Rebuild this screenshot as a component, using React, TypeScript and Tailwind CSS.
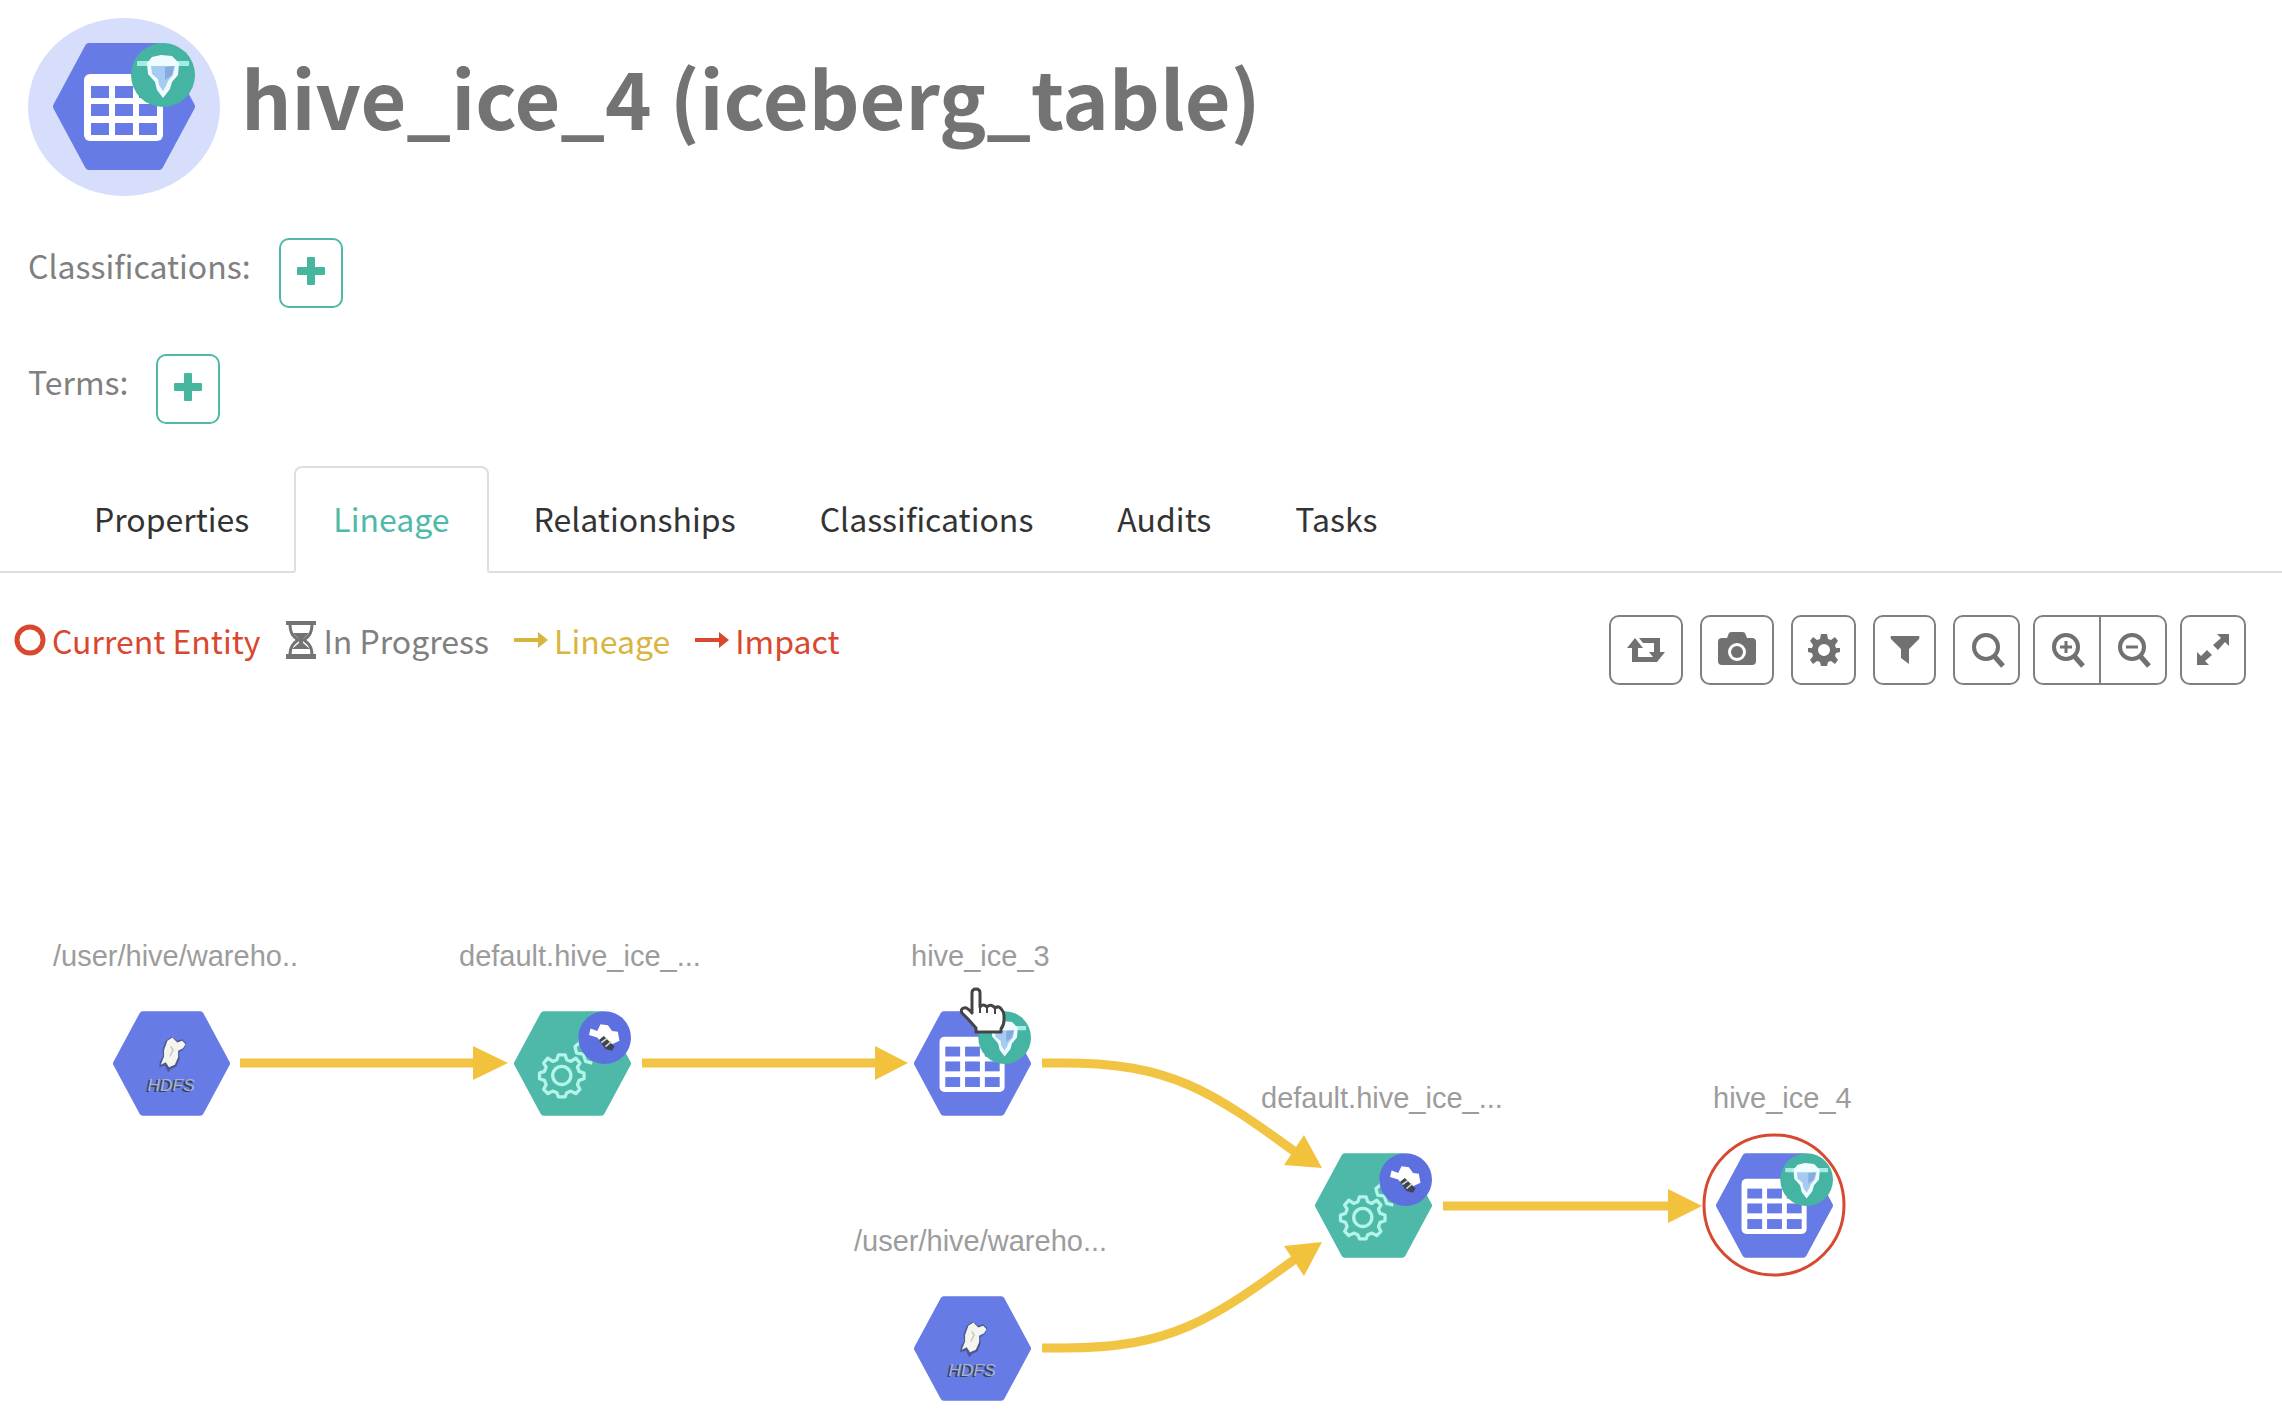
import { useState } from "react"
import type { ReactNode } from "react"
import clsx from "clsx"

type NodeKind = "hdfs" | "process" | "table"

const tabs = ["Properties", "Lineage", "Relationships", "Classifications", "Audits", "Tasks"]

const nodes: { id: string; kind: NodeKind; label: string; labelX: number; x: number; y: number; current?: boolean }[] = [
  { id: "hdfs-1", kind: "hdfs", label: "/user/hive/wareho..", labelX: 53, x: 171, y: 347 },
  { id: "process-1", kind: "process", label: "default.hive_ice_...", labelX: 459, x: 572, y: 347 },
  { id: "table-3", kind: "table", label: "hive_ice_3", labelX: 911, x: 972, y: 347 },
  { id: "hdfs-2", kind: "hdfs", label: "/user/hive/wareho...", labelX: 854, x: 972, y: 632 },
  { id: "process-2", kind: "process", label: "default.hive_ice_...", labelX: 1261, x: 1373, y: 489 },
  { id: "table-4", kind: "table", label: "hive_ice_4", labelX: 1713, x: 1774, y: 489, current: true },
]

const edges = [
  { line: "M240 347H476", head: "M473 330L508 347L473 364Z" },
  { line: "M642 347H878", head: "M875 330L908 347L875 364Z" },
  { line: "M1042 347H1064C1170 347 1210 374 1298 438", head: "M1304 419L1322 452L1284 449Z" },
  { line: "M1042 632H1064C1170 632 1210 605 1298 541", head: "M1284 530L1322 526L1304 560Z" },
  { line: "M1443 490H1671", head: "M1668 473L1702 490L1668 507Z" },
]

function Hexagon({ color }: { color: string }) {
  return (
    <path d="M36 4H106L138 63.500L106 123H36L4 63.500Z" fill={color} stroke={color} strokeWidth="8" strokeLinejoin="round" />
  )
}

function TableIcon() {
  return (
    <>
      <Hexagon color="#667be5" />
      <rect x="31" y="31" width="79" height="67" rx="6" fill="#fff" />
      {[43, 61, 80].map((y) =>
        [38, 62, 86].map((x) => <rect key={`${x}-${y}`} x={x} y={y} width="18" height="12" fill="#667be5" />)
      )}
      <circle cx="110" cy="32" r="32" fill="#46b4a3" />
      <path d="M84 18H136V23H84Z" fill="#a5ece4" />
      <path d="M94 20L99 14L108 12L119 13L126 20L125 32L119 39L117 46L110 55L104 47L102 39L95 31Z" fill="#effcff" />
      <path d="M98 23H122L120 32L115 38L113 43L110 48L106 42L105 36L99 31Z" fill="#a5cbf3" />
      <path d="M112 24L121 23L119 32L112 37Z" fill="#86acdf" />
    </>
  )
}

function ProcessIcon() {
  return (
    <>
      <Hexagon color="#4eb9a8" />
      <g fill="none" stroke="#b4f5ea" strokeWidth="4" strokeLinejoin="round">
        <path d="M54 53H62L64 59L69 61L75 57L80 63L77 68L79 73L85 75V82L79 84L77 89L80 95L75 100L69 97L64 99L62 104H54L52 99L47 97L41 100L36 95L39 89L37 84L31 82V75L37 73L39 68L36 63L41 57L47 61L52 59Z" />
        <circle cx="58" cy="78" r="11" />
        <path d="M81 29L80 38L74 43L76 51L84 52L87 61L95 63" />
      </g>
      <circle cx="110" cy="32" r="32" fill="#5d70df" />
      <path d="M91 29L93 21L101 24L105 16L114 17L119 24L126 25L128 36L119 40L111 34L105 37L101 32Z" fill="#fff" />
      <path d="M103 35L109 30L122 43L119 48L111 46Z" fill="#3d4555" />
      <path d="M106 38L113 33M111 43L118 37" stroke="#d7d4c5" strokeWidth="2" />
    </>
  )
}

function HdfsIcon() {
  return (
    <>
      <Hexagon color="#667be5" />
      <path d="M64 36L71 31L78 36L84 34L89 39L86 46L80 50L81 57L77 67L71 70L67 74L63 66L56 68L57 61L61 54L60 47Z" fill="#4d5992" />
      <path d="M66 36L72 32L78 38L84 36L88 40L85 45L79 48L79 56L75 65L68 68L64 62L58 65L62 55L62 47Z" fill="#f5f5ef" />
      <path d="M70 43L73 47L69 55" fill="none" stroke="#c8c9c6" strokeWidth="2" />
      <text x="40" y="98" fill="#39435d" fontFamily="Liberation Sans, sans-serif" fontSize="21" fontStyle="italic" fontWeight="bold">HDFS</text>
      <text x="42" y="97" fill="#a9b3c9" fontFamily="Liberation Sans, sans-serif" fontSize="21" fontStyle="italic" aria-hidden="true">HDFS</text>
    </>
  )
}

function EntityIcon({ kind }: { kind: NodeKind }) {
  if (kind === "hdfs") return <HdfsIcon />
  if (kind === "process") return <ProcessIcon />
  return <TableIcon />
}

function AddButton({ label }: { label: string }) {
  return (
    <button type="button" aria-label={label} className="flex h-[70px] w-16 items-center justify-center rounded-[10px] border-2 border-[#4fb9a6] text-[#46b69e]">
      <svg width="28" height="28" viewBox="0 0 28 28" className="-mt-1" fill="currentColor" aria-hidden="true">
        <path d="M11 0H17Q18 0 18 1V10H27Q28 10 28 11V17Q28 18 27 18H18V27Q18 28 17 28H11Q10 28 10 27V18H1Q0 18 0 17V11Q0 10 1 10H10V1Q10 0 11 0Z" />
      </svg>
    </button>
  )
}

function LegendArrow() {
  return (
    <svg width="34" height="16" viewBox="0 0 34 16" fill="currentColor" aria-hidden="true">
      <path d="M0 6H24V0L34 8L24 16V10H0Z" />
    </svg>
  )
}

function ToolButton({ label, className, children }: { label: string; className: string; children: ReactNode }) {
  return (
    <button type="button" aria-label={label} title={label} className={clsx("flex h-[70px] items-center justify-center border-2 border-[#808080] text-[#717171]", className)}>
      <svg width="40" height="36" viewBox="0 0 40 36" fill="currentColor" aria-hidden="true">
        {children}
      </svg>
    </button>
  )
}

function Magnifier({ children }: { children?: ReactNode }) {
  return (
    <g fill="none" stroke="currentColor">
      <circle cx="19" cy="15" r="12" strokeWidth="4" />
      <path d="M28 25L36 34" strokeWidth="5" />
      {children}
    </g>
  )
}

export default function App() {
  const [activeTab, setActiveTab] = useState("Lineage")

  return (
    <main className="min-h-screen bg-white font-['Noto_Sans_CJK_JP','Noto_Sans',sans-serif] text-[32px] leading-[48px] text-[#808080]">
      {/* Entity header */}
      <header className="flex items-center gap-[21px] px-7 pt-[18px]">
        <svg width="192" height="180" viewBox="0 0 192 180" aria-hidden="true">
          <ellipse cx="96" cy="89" rx="96" ry="89" fill="#d7defb" />
          <svg x="25" y="25" width="142" height="127" viewBox="0 0 142 127">
            <TableIcon />
          </svg>
        </svg>
        <h1 className="pb-6 text-[79px] leading-[100px] font-semibold text-[#737373]">hive_ice_4 (iceberg_table)</h1>
      </header>

      <section className="px-7 pt-10">
        <div className="flex items-center gap-7">
          <span className="pb-4">Classifications:</span>
          <AddButton label="Add classification" />
        </div>
        <div className="mt-[46px] flex items-center gap-7">
          <span className="pb-4">Terms:</span>
          <AddButton label="Add term" />
        </div>
      </section>

      {/* Tabs */}
      <nav role="tablist" className="mt-[42px] flex gap-[6px] border-b-2 border-[#dedede] px-[55px]">
        {tabs.map((tab) => (
          <button
            key={tab}
            type="button"
            role="tab"
            aria-selected={activeTab === tab}
            onClick={() => setActiveTab(tab)}
            className={clsx(
              "-mb-[2px] h-[107px] rounded-t-lg border-2 px-[37px] pb-[3px]",
              activeTab === tab ? "border-[#dedede] border-b-white bg-white text-[#4fb9a9]" : "border-transparent text-[#333]"
            )}
          >
            {tab}
          </button>
        ))}
      </nav>

      {/* Legend and toolbar */}
      <div className="flex items-start justify-between pt-[42px] pr-9 pl-[14px]">
        <ul className="flex items-center gap-[25px] pt-[1px]">
          <li className="flex items-center gap-[6px] text-[#d9472e]">
            <svg width="32" height="32" viewBox="0 0 32 32" fill="none" stroke="currentColor" strokeWidth="5" aria-hidden="true">
              <circle cx="16" cy="16" r="13" />
            </svg>
            Current Entity
          </li>
          <li className="flex items-center gap-[6px]">
            <svg width="32" height="38" viewBox="0 0 32 38" fill="#737373" aria-hidden="true">
              <path d="M1 0H31V4H1ZM1 33H31V38H1Z" />
              <path d="M5 3C5 13 9 16 13 19C9 22 5 25 5 34M27 3C27 13 23 16 19 19C23 22 27 25 27 34" fill="none" stroke="#737373" strokeWidth="3" />
              <path d="M8 12H24L18 18V22L25 28H7L14 22V18Z" />
            </svg>
            In Progress
          </li>
          <li className="flex items-center gap-[6px] text-[#d8b53f]">
            <LegendArrow />
            Lineage
          </li>
          <li className="flex items-center gap-[6px] text-[#d9472e]">
            <LegendArrow />
            Impact
          </li>
        </ul>

        <div className="flex items-center gap-[17px]">
          <ToolButton label="Reset" className="w-[74px] rounded-[10px]">
            <path d="M1 16L9 6L17 16H12V25H27L31 30H6V16ZM13 6H34V20H39L31 30L23 20H28V11H17Z" />
          </ToolButton>
          <ToolButton label="Export to PNG" className="w-[74px] rounded-[10px]">
            <path fillRule="evenodd" d="M5 6H10L12 1Q13 0 15 0H25Q27 0 28 1L30 6H35Q39 6 39 10V29Q39 33 35 33H5Q1 33 1 29V10Q1 6 5 6ZM20 11A9 9 0 1 0 20 29A9 9 0 1 0 20 11Z" />
            <circle cx="20" cy="20" r="6" />
          </ToolButton>
          <ToolButton label="Settings" className="w-[65px] rounded-[10px]">
            <path fillRule="evenodd" d="M17 2H23L24 7L27 8L31 5L34 9L31 13L32 16L36 16V20L32 21L31 24L34 28L31 32L27 29L24 30L23 34H17L16 30L13 29L9 32L6 28L9 24L8 21L4 20V16L8 16L9 13L6 9L9 5L13 8L16 7ZM20 12A6 6 0 1 0 20 24A6 6 0 1 0 20 12Z" />
          </ToolButton>
          <ToolButton label="Filter" className="w-[63px] rounded-[10px]">
            <path d="M6 4H34Q35 5 34 7L24 17V32L16 26V17L6 7Q5 5 6 4Z" />
          </ToolButton>
          <ToolButton label="Search" className="w-[67px] rounded-[10px]">
            <Magnifier />
          </ToolButton>
          <div className="-mx-1 flex">
            <ToolButton label="Zoom in" className="w-[68px] rounded-l-[10px]">
              <Magnifier>
                <path d="M19 9V21M13 15H25" strokeWidth="3" />
              </Magnifier>
            </ToolButton>
            <ToolButton label="Zoom out" className="-ml-[2px] w-[68px] rounded-r-[10px]">
              <Magnifier>
                <path d="M13 15H25" strokeWidth="3" />
              </Magnifier>
            </ToolButton>
          </div>
          <ToolButton label="Full screen" className="w-[66px] rounded-[10px]">
            <path d="M24 2H36V14L32 10L25 18L20 13L28 6ZM4 20L8 24L14 18L19 23L12 29L16 33H4Z" />
          </ToolButton>
        </div>
      </div>

      {/* Lineage graph */}
      <svg viewBox="0 0 2282 700" className="mt-[31px] block w-full" role="img" aria-label="Lineage graph">
        {edges.map((edge) => (
          <g key={edge.line}>
            <path d={edge.line} fill="none" stroke="#f2c443" strokeWidth="9" />
            <path d={edge.head} fill="#f2c23d" />
          </g>
        ))}
        {nodes.map((node) => (
          <g key={node.id}>
            {node.current && <circle cx={node.x} cy={node.y} r="70" fill="#fff" stroke="#d64a32" strokeWidth="3" />}
            <text x={node.labelX} y={node.y - 97} fill="#9c9c9c" fontFamily="Liberation Sans, Arial, sans-serif" fontSize="29">
              {node.label}
            </text>
            <svg x={node.x - 58} y={node.y - 52} width="117" height="105" viewBox="0 0 142 127">
              <EntityIcon kind={node.kind} />
            </svg>
          </g>
        ))}
        {/* Pointer over hive_ice_3 */}
        <path
          d="M972 277Q972 273 976 273Q980 273 980 277V291Q983 287 987 291Q991 287 995 292Q999 289 1002 294Q1004 296 1004 300V304Q1004 309 1001 313V316H976V312L968 303L962 297Q960 293 964 292Q967 291 972 297Z"
          fill="#fff"
          stroke="#444"
          strokeWidth="3"
          strokeLinejoin="round"
        />
        <path d="M980 289V297M987 291V297M995 292V298" stroke="#444" strokeWidth="2" />
      </svg>
    </main>
  )
}
